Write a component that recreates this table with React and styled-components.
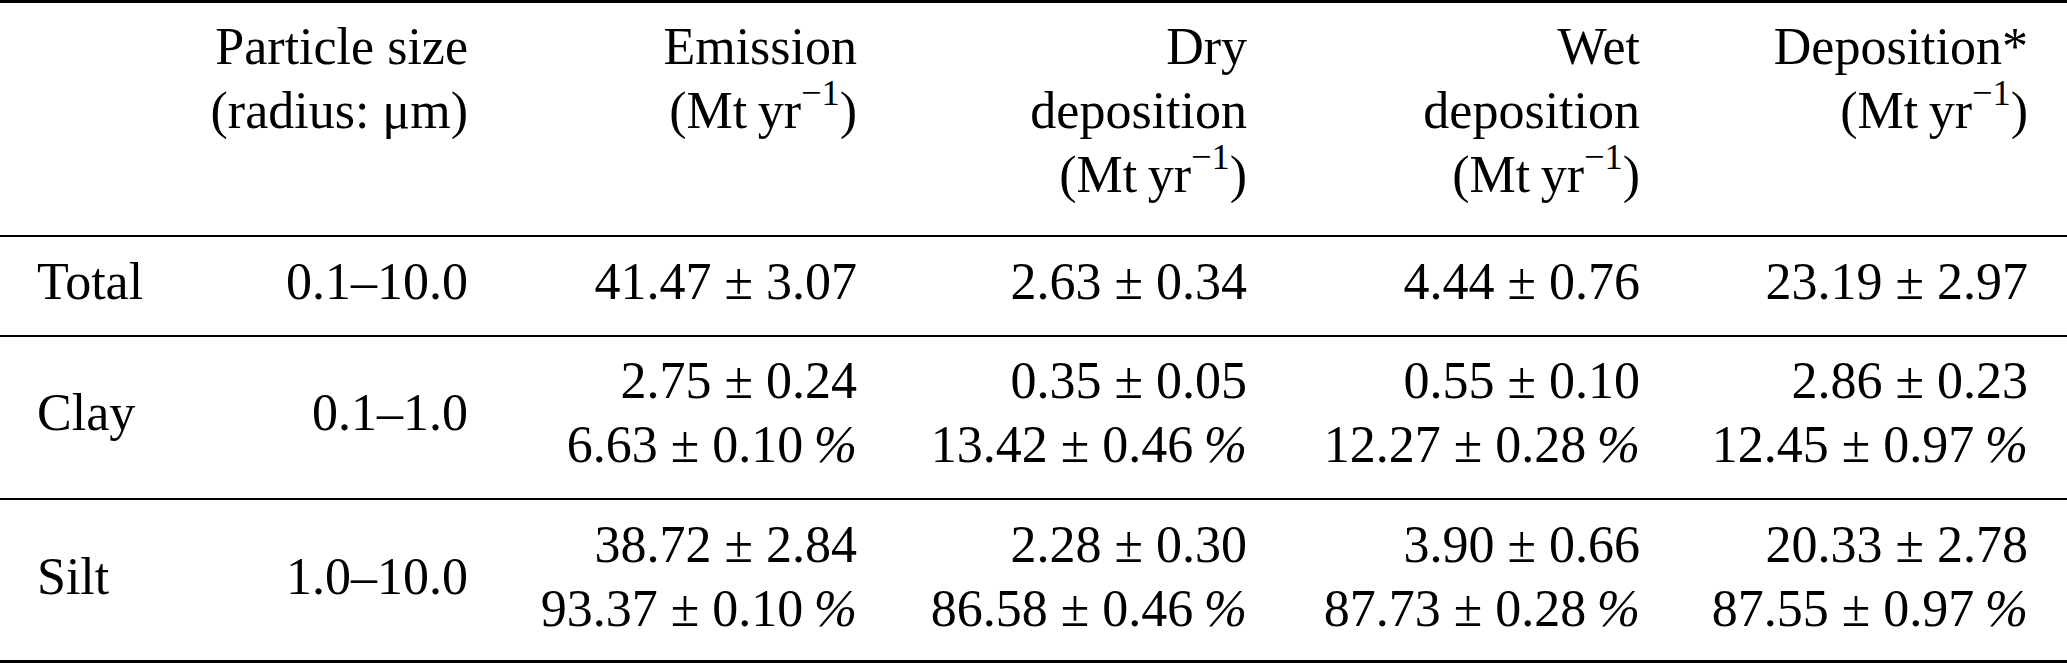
import React from 'react';
import styled, { createGlobalStyle } from 'styled-components';

const GlobalStyle = createGlobalStyle`
  html, body {
    margin: 0;
    padding: 0;
    background: #fff;
  }
`;

const Table = styled.div`
  width: 2067px;
  font-family: "Liberation Serif", "Times New Roman", serif;
  font-size: 52px;
  line-height: 64px;
  color: #000;
`;

const Row = styled.div`
  display: grid;
  grid-template-columns: 143px 288px 389px 390px 393px 388px;
  align-items: ${p => (p.$head ? 'start' : 'center')};
  padding: ${p => p.$top}px 39px ${p => p.$bottom}px 37px;
  border-top: ${p => p.$ruleTop || 0}px solid #000;
  border-bottom: ${p => p.$rule}px solid #000;
`;

const Cell = styled.div`
  text-align: ${p => (p.$left ? 'left' : 'right')};
  white-space: nowrap;
`;

const Line = styled.span`
  display: block;
`;

const Sup = styled.sup`
  font-size: 0.7em;
  line-height: 0;
  vertical-align: 0.62em;
`;

const Pct = styled.span`
  font-style: italic;
  margin-left: 0.2em;
`;

const Unit = () => (
  <>
    (Mt&#8201;yr<Sup>−1</Sup>)
  </>
);

const Val = ({ v, e, pct }) => (
  <Line>
    {v} ± {e}
    {pct && <Pct>%</Pct>}
  </Line>
);

const rows = [
  {
    name: 'Total',
    size: '0.1–10.0',
    vals: [['41.47', '3.07'], ['2.63', '0.34'], ['4.44', '0.76'], ['23.19', '2.97']],
  },
  {
    name: 'Clay',
    size: '0.1–1.0',
    vals: [['2.75', '0.24'], ['0.35', '0.05'], ['0.55', '0.10'], ['2.86', '0.23']],
    pcts: [['6.63', '0.10'], ['13.42', '0.46'], ['12.27', '0.28'], ['12.45', '0.97']],
  },
  {
    name: 'Silt',
    size: '1.0–10.0',
    vals: [['38.72', '2.84'], ['2.28', '0.30'], ['3.90', '0.66'], ['20.33', '2.78']],
    pcts: [['93.37', '0.10'], ['86.58', '0.46'], ['87.73', '0.28'], ['87.55', '0.97']],
  },
];

export default function App() {
  return (
    <>
      <GlobalStyle />
      <Table>
        <Row $head $ruleTop={3} $top={11.5} $bottom={28.5} $rule={2}>
          <Cell $left />
          <Cell>
            <Line>Particle size</Line>
            <Line>(radius: μm)</Line>
          </Cell>
          <Cell>
            <Line>Emission</Line>
            <Line><Unit /></Line>
          </Cell>
          <Cell>
            <Line>Dry</Line>
            <Line>deposition</Line>
            <Line><Unit /></Line>
          </Cell>
          <Cell>
            <Line>Wet</Line>
            <Line>deposition</Line>
            <Line><Unit /></Line>
          </Cell>
          <Cell>
            <Line>Deposition*</Line>
            <Line><Unit /></Line>
          </Cell>
        </Row>
        {rows.map((r, i) => {
          const last = i === rows.length - 1;
          return (
            <Row
              key={r.name}
              $top={i === 1 ? 11.5 : 12.5}
              $bottom={last ? 19.5 : 21.5}
              $rule={last ? 3 : 2}
            >
              <Cell $left>{r.name}</Cell>
              <Cell>{r.size}</Cell>
              {r.vals.map((v, j) => (
                <Cell key={j}>
                  <Val v={v[0]} e={v[1]} />
                  {r.pcts && <Val v={r.pcts[j][0]} e={r.pcts[j][1]} pct />}
                </Cell>
              ))}
            </Row>
          );
        })}
      </Table>
    </>
  );
}
